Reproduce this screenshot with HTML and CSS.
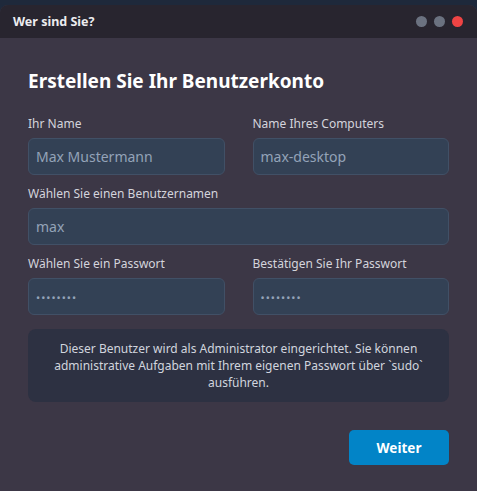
FILE: index.html
```html
<!DOCTYPE html>
<html lang="de">
<head>
<meta charset="utf-8">
<title>Wer sind Sie?</title>
<link rel="stylesheet" href="styles.css">
</head>
<body>
<div class="window">
  <div class="titlebar">
    <span class="title">Wer sind Sie?</span>
    <div class="dots">
      <span class="dot"></span>
      <span class="dot"></span>
      <span class="dot dot-close"></span>
    </div>
  </div>
  <div class="content">
    <h1 class="heading">Erstellen Sie Ihr Benutzerkonto</h1>
    <div class="grid">
      <label class="field">
        <span class="label">Ihr Name</span>
        <input class="input" type="text" placeholder="Max Mustermann">
      </label>
      <label class="field">
        <span class="label">Name Ihres Computers</span>
        <input class="input" type="text" placeholder="max-desktop">
      </label>
      <label class="field wide">
        <span class="label">Wählen Sie einen Benutzernamen</span>
        <input class="input" type="text" placeholder="max">
      </label>
      <label class="field">
        <span class="label">Wählen Sie ein Passwort</span>
        <input class="input pw" type="text" placeholder="••••••••">
      </label>
      <label class="field">
        <span class="label">Bestätigen Sie Ihr Passwort</span>
        <input class="input pw" type="text" placeholder="••••••••">
      </label>
    </div>
    <div class="info">Dieser Benutzer wird als Administrator eingerichtet. Sie können administrative Aufgaben mit Ihrem eigenen Passwort über `sudo` ausführen.</div>
    <div class="actions">
      <button class="btn" type="button">Weiter</button>
    </div>
  </div>
</div>
</body>
</html>
```

FILE: styles.css
```css
* { box-sizing: border-box; }
html, body { margin: 0; padding: 0; height: 100%; }
body {
  background: #1e293b;
  font-family: "Noto Sans", "DejaVu Sans", sans-serif;
  padding-top: 5px;
}
.window {
  background: #3c3746;
  border-radius: 8px 8px 0 0;
  height: 486px;
  overflow: hidden;
  display: flex;
  flex-direction: column;
}
.titlebar {
  background: #28252f;
  height: 33px;
  display: flex;
  align-items: center;
  justify-content: space-between;
  padding: 0 14px 0 13px;
}
.title {
  color: #ececf0;
  font-weight: 700;
  font-size: 12.5px;
}
.dots { display: flex; gap: 7px; }
.dot {
  width: 11px; height: 11px; border-radius: 50%;
  background: #6b7280;
}
.dot-close { background: #ef4444; }
.content {
  padding: 30px 28px 0 28px;
}
.heading {
  margin: 0 0 22px 0;
  color: #ffffff;
  font-size: 19px;
  font-weight: 700;
  line-height: 26px;
}
.grid {
  display: grid;
  grid-template-columns: 1fr 1fr;
  column-gap: 28px;
  row-gap: 11px;
}
.field { display: flex; flex-direction: column; gap: 6px; }
.wide { grid-column: 1 / 3; }
.label {
  color: #d4d4dc;
  font-size: 12px;
  line-height: 16px;
}
.input {
  height: 37px;
  background: #334155;
  border: 1px solid #415066;
  border-radius: 6px;
  padding: 0 7px;
  font-family: inherit;
  font-size: 14px;
  color: #e2e8f0;
  outline: none;
  width: 100%;
}
.input::placeholder { color: #94a3b8; }
.pw::placeholder { font-size: 11px; letter-spacing: 1px; }
.info {
  margin-top: 14px;
  background: #2d3142;
  border-radius: 8px;
  padding: 11px 12px;
  color: #d1d5de;
  font-size: 12px;
  line-height: 17px;
  text-align: center;
}
.actions {
  display: flex;
  justify-content: flex-end;
  margin-top: 28px;
}
.btn {
  width: 100px;
  height: 35px;
  background: #0284c7;
  color: #ffffff;
  border: none;
  border-radius: 5px;
  font-family: inherit;
  font-weight: 700;
  font-size: 13.5px;
}
```
